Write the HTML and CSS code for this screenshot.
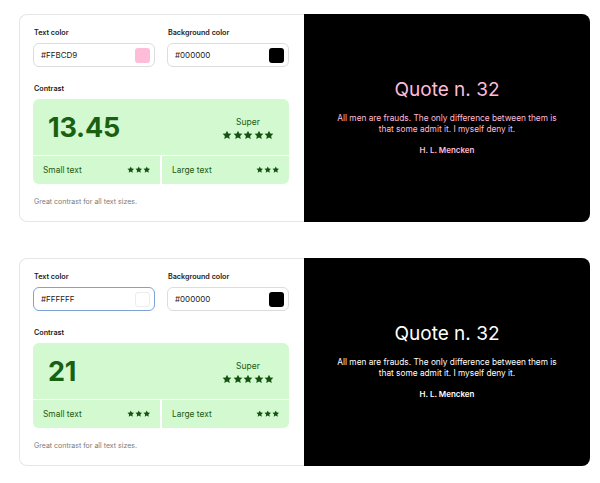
FILE: index.html
```html
<!DOCTYPE html>
<html>
<head>
<meta charset="utf-8">
<link rel="stylesheet" href="styles.css">
</head>
<body>
<svg width="0" height="0" class="defs">
  <defs>
    <symbol id="star" viewBox="0 0 24 24"><path d="M12 1.5l3.2 6.7 7.3.9-5.4 5.1 1.4 7.3L12 17.9l-6.5 3.6 1.4-7.3-5.4-5.1 7.3-.9z"/></symbol>
  </defs>
</svg>
<main class="page">
  <section class="card">
    <div class="controls">
      <div class="fields">
        <div class="field">
          <div class="label">Text color</div>
          <div class="input"><span>#FFBCD9</span><i class="swatch sw-pink"></i></div>
        </div>
        <div class="field">
          <div class="label">Background color</div>
          <div class="input"><span>#000000</span><i class="swatch sw-black"></i></div>
        </div>
      </div>
      <div class="label contrast-label">Contrast</div>
      <div class="result">
        <div class="result-top">
          <div class="ratio">13.45</div>
          <div class="grade">
            <div class="grade-name">Super</div>
            <div class="stars big"><svg><use href="#star"/></svg><svg><use href="#star"/></svg><svg><use href="#star"/></svg><svg><use href="#star"/></svg><svg><use href="#star"/></svg></div>
          </div>
        </div>
        <div class="result-bottom">
          <div class="cell"><span>Small text</span><div class="stars small"><svg><use href="#star"/></svg><svg><use href="#star"/></svg><svg><use href="#star"/></svg></div></div>
          <div class="cell"><span>Large text</span><div class="stars small"><svg><use href="#star"/></svg><svg><use href="#star"/></svg><svg><use href="#star"/></svg></div></div>
        </div>
      </div>
      <div class="note">Great contrast for all text sizes.</div>
    </div>
    <div class="preview pink">
      <div class="title">Quote n. 32</div>
      <p class="quote">All men are frauds. The only difference between them is that some admit it. I myself deny it.</p>
      <div class="author">H. L. Mencken</div>
    </div>
  </section>

  <section class="card">
    <div class="controls">
      <div class="fields">
        <div class="field">
          <div class="label">Text color</div>
          <div class="input focus"><span>#FFFFFF</span><i class="swatch sw-white"></i></div>
        </div>
        <div class="field">
          <div class="label">Background color</div>
          <div class="input"><span>#000000</span><i class="swatch sw-black"></i></div>
        </div>
      </div>
      <div class="label contrast-label">Contrast</div>
      <div class="result">
        <div class="result-top">
          <div class="ratio">21</div>
          <div class="grade">
            <div class="grade-name">Super</div>
            <div class="stars big"><svg><use href="#star"/></svg><svg><use href="#star"/></svg><svg><use href="#star"/></svg><svg><use href="#star"/></svg><svg><use href="#star"/></svg></div>
          </div>
        </div>
        <div class="result-bottom">
          <div class="cell"><span>Small text</span><div class="stars small"><svg><use href="#star"/></svg><svg><use href="#star"/></svg><svg><use href="#star"/></svg></div></div>
          <div class="cell"><span>Large text</span><div class="stars small"><svg><use href="#star"/></svg><svg><use href="#star"/></svg><svg><use href="#star"/></svg></div></div>
        </div>
      </div>
      <div class="note">Great contrast for all text sizes.</div>
    </div>
    <div class="preview white">
      <div class="title">Quote n. 32</div>
      <p class="quote">All men are frauds. The only difference between them is that some admit it. I myself deny it.</p>
      <div class="author">H. L. Mencken</div>
    </div>
  </section>
</main>
</body>
</html>
```

FILE: styles.css
```css
* { box-sizing: border-box; }
html, body { margin: 0; padding: 0; background: #fff; }
body { font-family: Inter, "Noto Sans", sans-serif; color: #111; }
.defs { position: absolute; }

.page {
  padding: 14px 0 0 19px;
  display: flex;
  flex-direction: column;
  gap: 36px;
}

.card {
  display: flex;
  width: 571px;
}

.controls {
  width: 285px;
  border: 1px solid #e6e6e6;
  border-right: none;
  border-radius: 8px 0 0 8px;
  padding: 13px 15px 14px 13px;
}

.fields {
  display: grid;
  grid-template-columns: 1fr 1fr;
  gap: 12px;
}

.label {
  font-size: 7.2px;
  line-height: 10px;
  font-weight: 600;
  color: #1a1a1a;
  padding-left: 1px;
}

.input {
  margin-top: 5px;
  height: 24px;
  border: 1px solid #dcdcdc;
  border-radius: 6px;
  display: flex;
  align-items: center;
  justify-content: space-between;
  padding: 0 4px 0 7px;
  font-size: 8px;
  color: #222;
}
.input.focus { border-color: #7ba3d6; }

.swatch {
  width: 15px;
  height: 15px;
  border-radius: 3px;
  display: block;
}
.sw-pink { background: #ffbcd9; }
.sw-black { background: #000; }
.sw-white { background: #fff; border: 1px solid #ececec; }

.contrast-label { margin-top: 17px; }

.result {
  margin-top: 5px;
  background: #d3f9d1;
  border-radius: 6px;
  color: #145c10;
  overflow: hidden;
}

.result-top {
  height: 57px;
  display: flex;
  align-items: center;
  justify-content: space-between;
  padding: 0 15px 0 15px;
  border-bottom: 1px solid #fff;
}

.ratio {
  font-size: 27px;
  font-weight: 700;
  letter-spacing: -0.2px;
  color: #176111;
  margin-top: 1px;
}

.grade {
  display: flex;
  flex-direction: column;
  align-items: center;
  gap: 3px;
  margin-top: 2px;
}
.grade-name {
  font-size: 8.5px;
  line-height: 10px;
  color: #1c5a17;
}

.stars { display: flex; fill: #14530f; }
.stars.big { gap: 0.5px; }
.stars.big svg { width: 10px; height: 10px; }
.stars.small { gap: 0.5px; }
.stars.small svg { width: 7.5px; height: 7.5px; }

.result-bottom {
  height: 28px;
  display: grid;
  grid-template-columns: 1fr 1fr;
  gap: 2px;
  background: #fff;
}
.cell {
  background: #d3f9d1;
  display: flex;
  align-items: center;
  justify-content: space-between;
  padding: 0 10px 0 10px;
  font-size: 8.4px;
  color: #1b5a16;
}

.note {
  margin-top: 13px;
  font-size: 7px;
  line-height: 10px;
  color: #7a7a7a;
  padding-left: 1px;
}

.preview {
  flex: 1;
  background: #000;
  border-radius: 0 8px 8px 0;
  display: flex;
  flex-direction: column;
  align-items: center;
  justify-content: center;
  text-align: center;
  padding: 0 20px 3px;
}
.preview.pink { color: #ffbcd9; }
.preview.white { color: #fff; }

.title {
  font-size: 19px;
  line-height: 24px;
  font-weight: 400;
}
.quote {
  margin: 11px 0 0;
  font-size: 8.3px;
  line-height: 11px;
  width: 224px;
}
.author {
  margin-top: 10px;
  font-size: 8px;
  line-height: 10px;
  font-weight: 600;
}
```
